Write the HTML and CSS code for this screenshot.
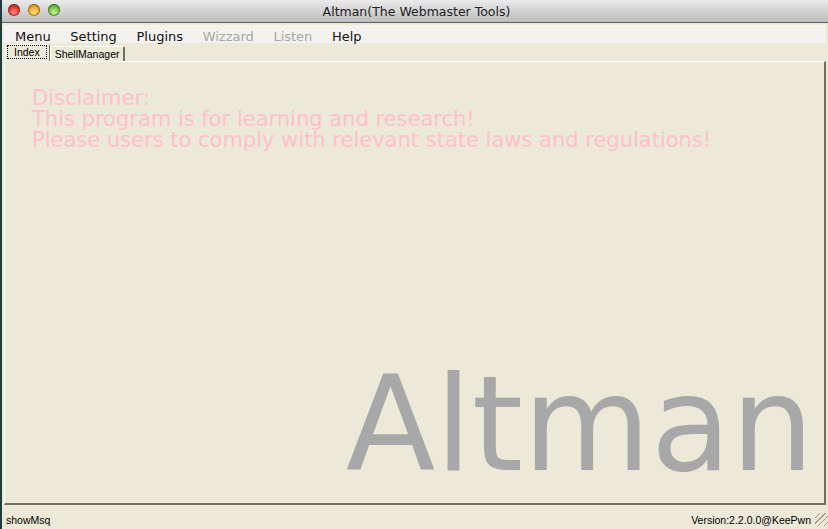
FILE: index.html
```html
<!DOCTYPE html>
<html>
<head>
<meta charset="utf-8">
<link rel="stylesheet" href="styles.css">
</head>
<body>
<div class="window">
  <div class="titlebar">
    <div class="lights">
      <span class="light red"></span>
      <span class="light yellow"></span>
      <span class="light green"></span>
    </div>
    <div class="title">Altman(The Webmaster Tools)</div>
  </div>
  <div class="body">
    <div class="menubar">
      <span class="mi">Menu</span>
      <span class="mi">Setting</span>
      <span class="mi">Plugins</span>
      <span class="mi dis">Wizzard</span>
      <span class="mi dis">Listen</span>
      <span class="mi">Help</span>
    </div>
    <div class="tabs">
      <span class="tab active"><span class="focus">Index</span></span>
      <span class="tab">ShellManager</span>
    </div>
    <div class="panel">
      <div class="disclaimer">
        <div>Disclaimer:</div>
        <div>This program is for learning and research!</div>
        <div>Please users to comply with relevant state laws and regulations!</div>
      </div>
      <div class="logo">Altman</div>
    </div>
    <div class="status">
      <span>showMsq</span>
      <span class="right">Version:2.2.0.0@KeePwn<span class="grip"></span></span>
    </div>
  </div>
</div>
</body>
</html>
```
FILE: styles.css
```css
html, body {
  margin: 0;
  padding: 0;
  height: 100%;
  overflow: hidden;
}
body {
  background: #1f3d3b;
}
.window {
  margin-left: 2px;
  height: 529px;
  display: flex;
  flex-direction: column;
  background: #ece9d8;
}
.titlebar {
  height: 22px;
  flex: none;
  position: relative;
  background: linear-gradient(#ebebeb, #d3d3d3 50%, #bdbdbd);
  border-bottom: 1px solid #626262;
  display: flex;
  align-items: center;
  justify-content: center;
  font-family: "DejaVu Sans", sans-serif;
  font-size: 12.5px;
  color: #222;
}
.lights {
  position: absolute;
  left: 6px;
  top: 4px;
  display: flex;
  gap: 8px;
}
.light {
  width: 12px;
  height: 12px;
  border-radius: 50%;
  box-shadow: inset 0 0 0 1px rgba(0,0,0,0.35);
}
.red { background: radial-gradient(circle at 50% 70%, #ff8a7e, #e0362c 55%, #9d1a14); }
.yellow { background: radial-gradient(circle at 50% 70%, #ffe07a, #f0a623 55%, #a66a0e); }
.green { background: radial-gradient(circle at 50% 70%, #c8f29a, #6cc03a 55%, #2f7a14); }
.title {
  margin-left: 3px;
  padding-top: 1px;
}
.body {
  flex: 1;
  display: flex;
  flex-direction: column;
  min-height: 0;
}
.menubar {
  margin: 2px 2px 0 1px;
  height: 18px;
  background: #f3f2ee;
  display: flex;
  align-items: center;
  padding: 4px 0 0 12px;
  box-sizing: border-box;
  font-family: "DejaVu Sans", sans-serif;
  font-size: 13px;
  color: #111;
}
.mi { margin-right: 19.6px; }
.dis { color: #a6a6a6; }
.tabs {
  height: 16px;
  margin-top: 2px;
  display: flex;
  align-items: flex-end;
  padding-left: 3px;
  font-family: "Liberation Sans", sans-serif;
  font-size: 10.5px;
  color: #000;
}
.tab {
  height: 14px;
  line-height: 14px;
  padding: 0 4px 0 4px;
  border-top: 1px solid #fff;
  border-left: 1px solid #fff;
  border-right: 2px solid #716f64;
  border-radius: 2px 2px 0 0;
}
.tab.active {
  height: 16px;
  padding: 0 2px 0 1px;
  border-right: 1px solid #716f64;
}
.focus {
  display: inline-block;
  border: 1px dotted #000;
  line-height: 12px;
  padding: 0 6px 0 6px;
}
.panel {
  flex: 1;
  margin: 0 2px 0 2px;
  border-top: 1px solid #fff;
  border-left: 1px solid #fff;
  border-right: 2px solid #716f64;
  border-bottom: 2px solid #716f64;
  display: flex;
  flex-direction: column;
  justify-content: space-between;
  min-height: 0;
}
.disclaimer {
  padding: 26px 0 0 27px;
  font-family: "DejaVu Sans", sans-serif;
  font-size: 21px;
  line-height: 21px;
  color: #ffc0cb;
}
.logo {
  align-self: flex-end;
  margin-right: 10px;
  font-family: "DejaVu Sans", sans-serif;
  font-size: 131px;
  line-height: 131px;
  color: #a8a8a8;
  margin-bottom: 13px;
}
.status {
  height: 24px;
  flex: none;
  display: flex;
  justify-content: space-between;
  align-items: flex-end;
  padding: 0 0 3px 4px;
  font-family: "Liberation Sans", sans-serif;
  font-size: 10.5px;
  color: #000;
  box-sizing: border-box;
}
.right {
  display: flex;
  align-items: flex-end;
}
.grip {
  width: 13px;
  height: 13px;
  margin-left: 4px;
  background: repeating-linear-gradient(135deg, transparent 0 3px, #9d9a8c 3px 4px);
}
```
